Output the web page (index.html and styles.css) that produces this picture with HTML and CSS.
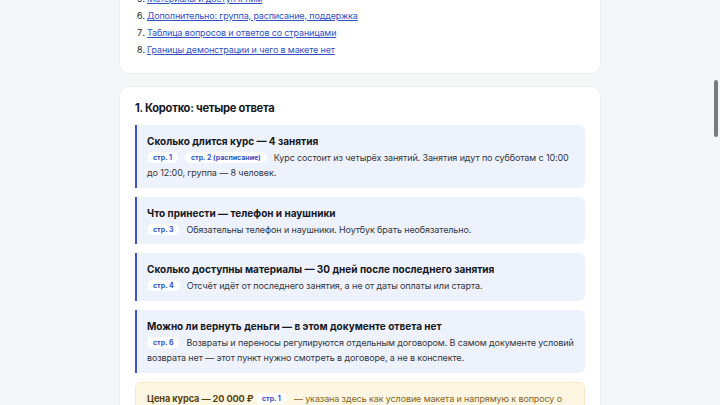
FILE: index.html
```html
<!DOCTYPE html>
<html lang="ru">
<head>
<meta charset="utf-8">
<link rel="stylesheet" href="styles.css">
</head>
<body>
<main class="page">
  <section class="card toc">
    <ol class="toc-list" start="5">
      <li><a href="#">Материалы и доступ к ним</a></li>
      <li><a href="#">Дополнительно: группа, расписание, поддержка</a></li>
      <li><a href="#">Таблица вопросов и ответов со страницами</a></li>
      <li><a href="#">Границы демонстрации и чего в макете нет</a></li>
    </ol>
  </section>
  <section class="card">
    <h2 class="card-title">1. Коротко: четыре ответа</h2>
    <div class="answers">
      <div class="answer">
        <div class="answer-title">Сколько длится курс — 4 занятия</div>
        <p class="answer-text"><span class="tag">стр. 1</span><span class="tag">стр. 2 (расписание)</span>Курс состоит из четырёх занятий. Занятия идут по субботам с 10:00 до 12:00, группа — 8 человек.</p>
      </div>
      <div class="answer">
        <div class="answer-title">Что принести — телефон и наушники</div>
        <p class="answer-text"><span class="tag">стр. 3</span>Обязательны телефон и наушники. Ноутбук брать необязательно.</p>
      </div>
      <div class="answer">
        <div class="answer-title">Сколько доступны материалы — 30 дней после последнего занятия</div>
        <p class="answer-text"><span class="tag">стр. 4</span>Отсчёт идёт от последнего занятия, а не от даты оплаты или старта.</p>
      </div>
      <div class="answer">
        <div class="answer-title">Можно ли вернуть деньги — в этом документе ответа нет</div>
        <p class="answer-text"><span class="tag">стр. 6</span>Возвраты и переносы регулируются отдельным договором. В самом документе условий возврата нет — этот пункт нужно смотреть в договоре, а не в конспекте.</p>
      </div>
      <div class="note">
        <p class="note-text"><b class="note-strong">Цена курса — 20 000 ₽</b> <span class="tag">стр. 1</span>— указана здесь как условие макета и напрямую к вопросу о возврате не относится.</p>
      </div>
    </div>
  </section>
</main>
<div class="scroll-thumb"></div>
</body>
</html>
```
FILE: styles.css
```css
html, body {
  margin: 0;
  padding: 0;
  height: 100%;
  overflow: hidden;
}
body {
  background: #f5f6f8;
  font-family: Inter, "Noto Sans", sans-serif;
  color: #2b2f36;
}
.page {
  width: 482px;
  margin: -21px auto 0;
  display: flex;
  flex-direction: column;
  gap: 12px;
}
.card {
  background: #fff;
  border: 1px solid #eceef2;
  border-radius: 10px;
  padding: 13px 15px 15px;
}
.toc {
  padding-top: 10px;
}
.toc-list {
  margin: 0;
  padding-left: 12px;
  font-size: 9px;
  letter-spacing: -0.15px;
  line-height: 17px;
  color: #1f2329;
}
.toc-list a {
  color: #3151c6;
  text-decoration: underline;
  text-underline-offset: 1px;
}
.card-title {
  margin: 0 0 9px;
  font-size: 11.2px;
  letter-spacing: -0.3px;
  line-height: 16px;
  font-weight: 700;
  color: #15181d;
}
.answers {
  display: flex;
  flex-direction: column;
  gap: 9px;
}
.answer {
  background: #eef2fd;
  border-left: 2px solid #3a56c4;
  border-radius: 0 6px 6px 0;
  padding: 9px 10px 7px 10px;
}
.answer-title {
  font-size: 10px;
  line-height: 15px;
  font-weight: 700;
  color: #15181d;
  margin-bottom: 2px;
}
.answer-text {
  margin: 0;
  font-size: 9px;
  letter-spacing: -0.12px;
  line-height: 14.8px;
  color: #33373e;
  text-align: left;
  text-wrap: wrap;
  word-spacing: 0;
}
.tag {
  display: inline-block;
  background: #fff;
  color: #3151c6;
  font-size: 7px;
  font-weight: 700;
  letter-spacing: 0;
  line-height: 11px;
  padding: 0 6px;
  border-radius: 6px;
  margin-right: 7px;
  vertical-align: 1px;
}
.note {
  background: #fdf6e3;
  border: 1px solid #f4e8c4;
  border-radius: 6px;
  padding: 8px 12px 10px 11px;
}
.note-text {
  margin: 0;
  font-size: 9px;
  letter-spacing: -0.12px;
  line-height: 15px;
  color: #86661f;
}
.note-strong {
  font-size: 9.2px;
  letter-spacing: -0.1px;
  color: #5a4210;
}
.scroll-thumb {
  position: fixed;
  top: 80px;
  right: 2px;
  width: 4px;
  height: 57px;
  border-radius: 2px;
  background: #7b7b7e;
}
```
